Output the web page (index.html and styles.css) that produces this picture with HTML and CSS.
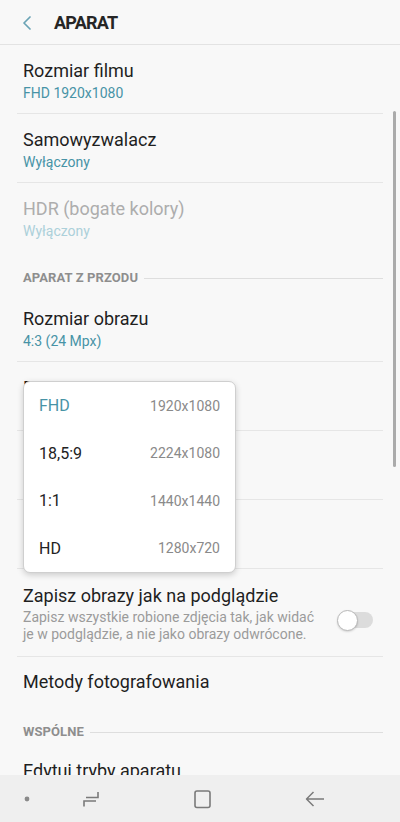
FILE: index.html
```html
<!DOCTYPE html>
<html lang="pl">
<head>
<meta charset="utf-8">
<link rel="stylesheet" href="styles.css">
</head>
<body>
<div class="screen">
  <div class="content">
    <header class="appbar">
      <svg class="back" width="10" height="14" viewBox="0 0 10 14"><path d="M8 1 L2 7 L8 13" fill="none" stroke="#6aa3b5" stroke-width="1.7" stroke-linecap="round" stroke-linejoin="round"/></svg>
      <h1 class="appbar-title">APARAT</h1>
    </header>

    <div class="item">
      <div class="title">Rozmiar filmu</div>
      <div class="sub">FHD 1920x1080</div>
    </div>
    <div class="item">
      <div class="title">Samowyzwalacz</div>
      <div class="sub">Wyłączony</div>
    </div>
    <div class="item item-last disabled">
      <div class="title">HDR (bogate kolory)</div>
      <div class="sub">Wyłączony</div>
    </div>

    <div class="section"><span class="section-label">APARAT Z PRZODU</span><span class="section-line"></span></div>

    <div class="item">
      <div class="title">Rozmiar obrazu</div>
      <div class="sub">4:3 (24 Mpx)</div>
    </div>
    <div class="item">
      <div class="title">Rozmiar wymiaru</div>
      <div class="sub">FHD 1920x1080</div>
    </div>
    <div class="item">
      <div class="title">Samowyzwalacz</div>
      <div class="sub">Wyłączony</div>
    </div>
    <div class="item">
      <div class="title">Kształt twarzy</div>
      <div class="sub">Wyłączony</div>
    </div>

    <div class="item item-switch">
      <div class="texts">
        <div class="title">Zapisz obrazy jak na podglądzie</div>
        <div class="desc">Zapisz wszystkie robione zdjęcia tak, jak widać<br>je w podglądzie, a nie jako obrazy odwrócone.</div>
      </div>
      <div class="switch"><span class="knob"></span></div>
    </div>

    <div class="item item-single item-last">
      <div class="title">Metody fotografowania</div>
    </div>

    <div class="section section-2"><span class="section-label">WSPÓLNE</span><span class="section-line"></span></div>

    <div class="item item-single">
      <div class="title">Edytuj tryby aparatu</div>
    </div>

    <div class="popup">
      <div class="popup-row selected"><span class="p-name">FHD</span><span class="p-val">1920x1080</span></div>
      <div class="popup-row"><span class="p-name">18,5:9</span><span class="p-val">2224x1080</span></div>
      <div class="popup-row"><span class="p-name">1:1</span><span class="p-val">1440x1440</span></div>
      <div class="popup-row"><span class="p-name">HD</span><span class="p-val">1280x720</span></div>
    </div>

    <div class="scrollbar"></div>
  </div>

  <nav class="navbar">
    <svg class="nav-dot" width="6" height="6" viewBox="0 0 6 6"><circle cx="3" cy="3" r="2.4" fill="#8a8a8a"/></svg>
    <svg class="nav-recent" width="18" height="18" viewBox="0 0 18 18"><path d="M4 7.5 H16 V2 M14 11 H2 V16.5" fill="none" stroke="#7a7a7a" stroke-width="1.6"/></svg>
    <svg class="nav-home" width="18" height="20" viewBox="0 0 18 20"><rect x="2" y="2" width="15" height="16.5" rx="2" fill="none" stroke="#7a7a7a" stroke-width="1.6"/></svg>
    <svg class="nav-back" width="20" height="18" viewBox="0 0 20 18"><path d="M19 9 H2 M8.5 2 L1.5 9 L8.5 16" fill="none" stroke="#7a7a7a" stroke-width="1.5" stroke-linejoin="round"/></svg>
  </nav>
</div>
</body>
</html>
```
FILE: styles.css
```css
* { box-sizing: border-box; }
html, body { margin: 0; padding: 0; }
body {
  width: 400px;
  height: 822px;
  overflow: hidden;
  background: #f8f8f8;
  font-family: Roboto, "Noto Sans", "Liberation Sans", sans-serif;
  color: #212121;
}
.screen {
  height: 822px;
  display: flex;
  flex-direction: column;
}
.content {
  flex: 1;
  overflow: hidden;
  position: relative;
}
.appbar {
  height: 45px;
  border-bottom: 1px solid #e3e3e3;
  display: flex;
  align-items: center;
  padding: 2px 0 0 22px;
}
.back { display: block; margin-top: -1px; }
.appbar-title {
  margin: 0 0 0 22px;
  font-size: 18px;
  font-weight: 700;
  letter-spacing: -0.8px;
  color: #262626;
  line-height: 22px;
}
.item {
  margin: 0 17px;
  padding: 15px 6px 9px;
  border-bottom: 1px solid #e6e6e6;
}
.item-last { border-bottom-color: transparent; }
.title {
  font-size: 18px;
  line-height: 22px;
  color: #1f1f1f;
}
.sub {
  font-size: 14px;
  line-height: 22px;
  color: #4793a6;
}
.disabled .title { color: #adadad; }
.disabled .sub { color: #acd0da; }

.section {
  display: flex;
  align-items: center;
  margin: 0 17px 0 23px;
  padding: 18px 0 7px;
}
.section-2 { padding: 16px 0 6px; }
.section-label {
  font-size: 13px;
  line-height: 16px;
  font-weight: 700;
  color: #8e8e8e;
  letter-spacing: 0.1px;
}
.section-line {
  flex: 1;
  height: 1px;
  background: #dedede;
  margin-left: 6px;
}

.item-switch {
  display: flex;
  align-items: center;
  padding: 16px 6px 13px;
}
.texts { flex: 1; }
.desc {
  margin-top: 2px;
  font-size: 14px;
  line-height: 17px;
  color: #9b9b9b;
}
.switch {
  position: relative;
  width: 36px;
  height: 21px;
  margin-right: 4px;
  margin-top: 12px;
  display: flex;
  align-items: center;
}
.switch::before {
  content: "";
  display: block;
  margin-left: 4px;
  width: 32px;
  height: 16px;
  border-radius: 8px;
  background: #dcdcdc;
}
.knob {
  position: absolute;
  left: 0;
  top: 0;
  width: 21px;
  height: 21px;
  border-radius: 50%;
  background: #fff;
  border: 1.5px solid #b9b9b9;
  box-shadow: 0 1px 2px rgba(0,0,0,0.15);
}
.item-single { padding: 14px 6px 14px; }

.popup {
  position: absolute;
  left: 23px;
  top: 381px;
  width: 213px;
  background: #fff;
  border: 1px solid #cfcfcf;
  border-radius: 7px;
  box-shadow: 0 2px 6px rgba(0,0,0,0.18);
}
.popup-row {
  height: 47.5px;
  display: flex;
  align-items: center;
  justify-content: space-between;
  padding: 0 15px;
}
.p-name { font-size: 16px; color: #222; }
.p-val { font-size: 14px; color: #8a8a8a; }
.selected .p-name { color: #4793a6; }

.scrollbar {
  position: absolute;
  right: 4px;
  top: 111px;
  width: 3px;
  height: 356px;
  border-radius: 2px;
  background: #ababab;
}

.navbar {
  height: 47px;
  flex: none;
  background: #efefef;
  display: flex;
  align-items: center;
  padding-left: 24px;
}
.navbar svg { display: block; }
.nav-recent { margin-left: 52px; }
.nav-home { margin-left: 93px; }
.nav-back { margin-left: 94px; }
```
